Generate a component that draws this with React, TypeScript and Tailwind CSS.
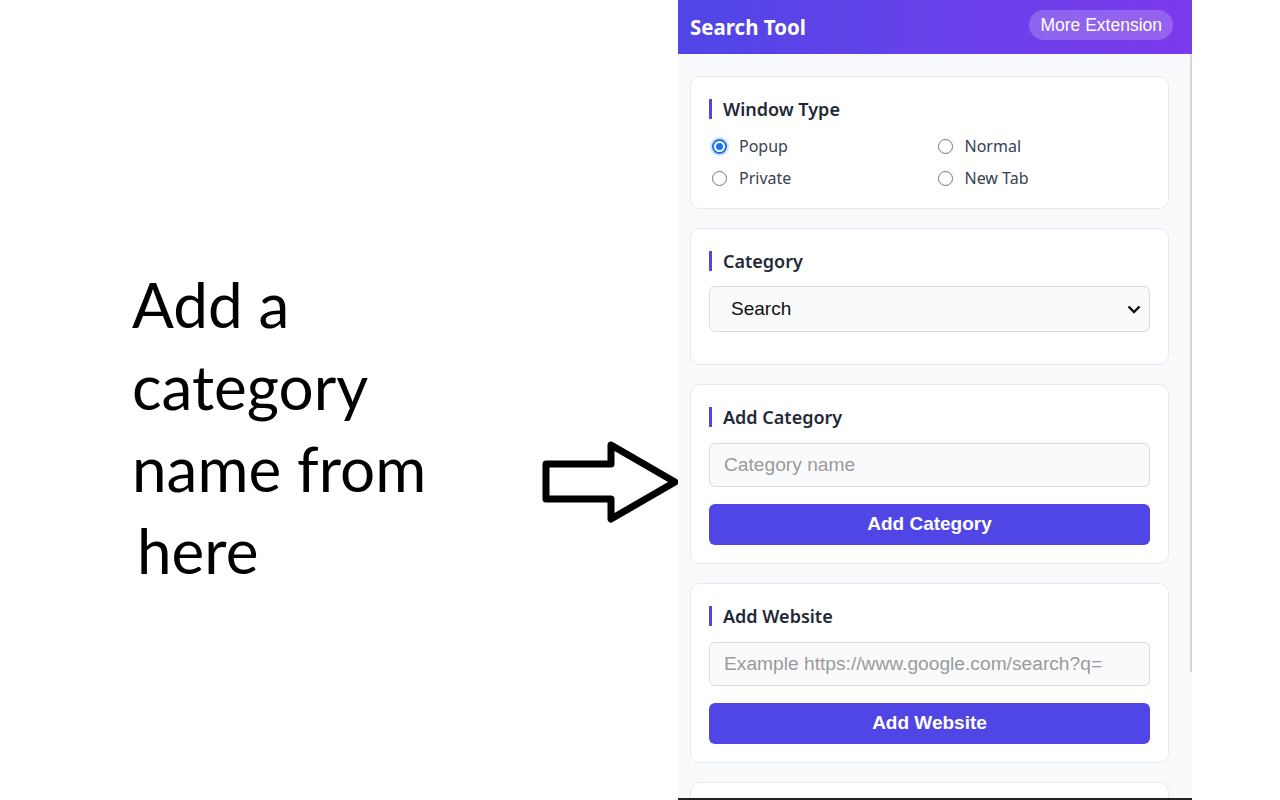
import React from "react";

const ui = { fontFamily: '"Noto Sans", "Open Sans", sans-serif' };
const arial = { fontFamily: '"Liberation Sans", Arial, sans-serif' };

function SectionTitle({ children }: { children: React.ReactNode }) {
  return (
    <div className="flex h-6 items-center">
      <span className="h-5 w-[3px] bg-[#4f46e5]" />
      <h2 className="pl-[11px] text-[18px] font-semibold leading-6 text-[#1f2937]" style={ui}>
        {children}
      </h2>
    </div>
  );
}

function Radio({ label, checked }: { label: string; checked?: boolean }) {
  return (
    <label className="flex h-6 items-center gap-3 pl-[3px]">
      {checked ? (
        <span className="flex h-[15px] w-[15px] items-center justify-center rounded-full border-2 border-[#1a73e8] bg-white ring-2 ring-[#1a73e8]/20">
          <span className="h-[7px] w-[7px] rounded-full bg-[#1a73e8]" />
        </span>
      ) : (
        <span className="h-[15px] w-[15px] rounded-full border-[1.5px] border-[#767676] bg-white" />
      )}
      <span className="text-[16px] text-[#374151]" style={ui}>
        {label}
      </span>
    </label>
  );
}

function Card({ children, className = "" }: { children: React.ReactNode; className?: string }) {
  return (
    <section className={`shrink-0 rounded-[10px] border border-[#e5e9f0] bg-white px-[18px] pt-5 pb-[18px] ${className}`}>
      {children}
    </section>
  );
}

function TextInput({ placeholder }: { placeholder: string }) {
  return (
    <input
      placeholder={placeholder}
      className="mt-[14px] h-11 w-full rounded-[6px] border border-[#d7dbe0] bg-[#f8fafc] px-[14px] text-[19.2px] text-[#111] outline-none placeholder:text-[#9a9a9a]"
      style={arial}
    />
  );
}

function Button({ children }: { children: React.ReactNode }) {
  return (
    <button
      className="mt-[17px] flex h-[41px] w-full items-center justify-center rounded-[6px] bg-[#4f46e5] text-[19px] font-bold text-white"
      style={arial}
    >
      {children}
    </button>
  );
}

function Arrow() {
  return (
    <svg width="140" height="86" viewBox="0 0 140 86" className="mt-[440px] shrink-0">
      <polygon
        points="6,24 71,24 71,5 135,42 71,79 71,59 6,59"
        fill="white"
        stroke="black"
        strokeWidth="7"
        strokeLinejoin="round"
      />
    </svg>
  );
}

export default function App() {
  return (
    <div className="flex h-[800px] w-[1280px] overflow-hidden bg-white">
      {/* caption + arrow */}
      <div className="flex w-[678px] shrink-0 pl-[132px]">
        <div
          className="w-[408px] shrink-0 pt-[263px] text-[62px] leading-[82px] text-black"
          style={{ fontFamily: 'Lato, "Noto Sans", sans-serif' }}
        >
          <div>Add a</div>
          <div>category</div>
          <div>name from</div>
          <div className="pl-[5px]">here</div>
        </div>
        <Arrow />
      </div>

      {/* extension popup */}
      <div className="flex h-[800px] w-[514px] shrink-0 flex-col border-b-2 border-[#222] bg-[#f8fafc]">
        <header className="flex h-[54px] shrink-0 justify-between bg-gradient-to-r from-[#4f46e5] to-[#7c3aed] pl-3 pr-[19px]">
          <h1 className="self-center text-[20.5px] font-bold text-white" style={ui}>
            Search Tool
          </h1>
          <button
            className="mt-[10px] h-[30px] rounded-full bg-white/20 px-[11px] text-[17.5px] text-white"
            style={arial}
          >
            More Extension
          </button>
        </header>

        <div className="flex min-h-0 flex-1 overflow-hidden">
          <main className="flex flex-1 flex-col gap-[19px] pl-3 pr-[21px] pt-[22px]">
            <Card>
              <SectionTitle>Window Type</SectionTitle>
              <div className="mt-[13px] grid grid-cols-2 gap-x-[10px] gap-y-2">
                <Radio label="Popup" checked />
                <Radio label="Normal" />
                <Radio label="Private" />
                <Radio label="New Tab" />
              </div>
            </Card>

            <Card>
              <SectionTitle>Category</SectionTitle>
              <div className="relative mt-[13px] mb-[14px]">
                <select
                  className="h-[46px] w-full appearance-none rounded-[6px] border border-[#d7dbe0] bg-[#f8fafc] pl-[21px] text-[19px] text-[#111] outline-none"
                  style={arial}
                  defaultValue="Search"
                >
                  <option>Search</option>
                </select>
                <svg
                  className="pointer-events-none absolute right-[8px] top-1/2 -translate-y-1/2"
                  width="16"
                  height="16"
                  viewBox="0 0 16 16"
                >
                  <path d="M2.5 5.5 8 11l5.5-5.5" fill="none" stroke="#111" strokeWidth="2.4" />
                </svg>
              </div>
            </Card>

            <Card>
              <SectionTitle>Add Category</SectionTitle>
              <TextInput placeholder="Category name" />
              <Button>Add Category</Button>
            </Card>

            <Card>
              <SectionTitle>Add Website</SectionTitle>
              <TextInput placeholder="Example https://www.google.com/search?q=" />
              <Button>Add Website</Button>
            </Card>

            <Card className="h-[120px]">
              <div />
            </Card>
          </main>
          <div className="w-[2px] shrink-0">
            <div className="h-[618px] bg-[#d4d8de]" />
          </div>
        </div>
      </div>
    </div>
  );
}
